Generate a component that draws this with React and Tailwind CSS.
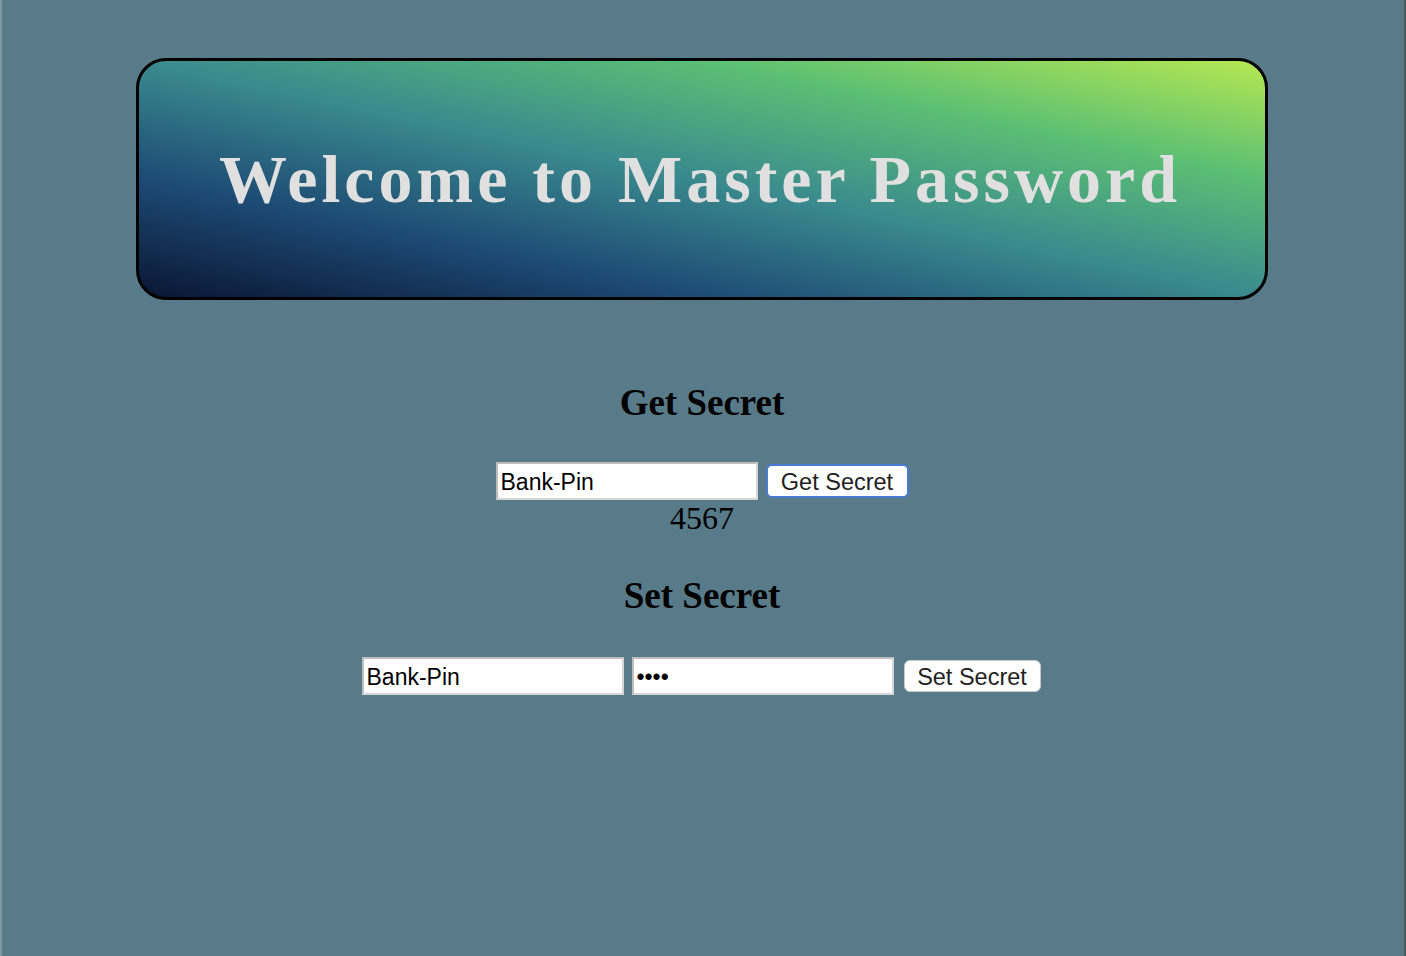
export default function App() {
  const inputCls =
    "w-[262px] h-[38px] bg-white border-2 border-t-[#bdbdbd] border-l-[#bdbdbd] border-b-[#d6d6d6] border-r-[#d6d6d6] px-[3px] pt-[2px] font-['Liberation_Sans',sans-serif] text-[23px] text-black outline-none";
  return (
    <div className="min-h-[956px] w-full bg-[#587a89] border-l-2 border-l-[#7d98a3] border-r-[4px] border-r-[#587a89] flex flex-col items-center">
      <div className="mt-[58px] w-[1132px] h-[242px] rounded-[30px] border-[3px] border-black bg-[linear-gradient(to_top_right,#0a1633_0%,#1d4a74_25%,#3a8a8e_50%,#5bbf74_75%,#b6e852_100%)] flex items-center justify-center">
        <h1 className="font-['Liberation_Serif',serif] font-bold text-[68px] tracking-[4px] text-[#e0e0e0] leading-none pr-[4px]">
          Welcome to Master Password
        </h1>
      </div>

      <h2 className="mt-[84px] font-['Liberation_Serif',serif] font-bold text-[37px] leading-none text-black">Get Secret</h2>
      <div className="mt-[41px] flex items-center gap-[8px]">
        <input defaultValue="Bank-Pin" className={inputCls} />
        <button className="w-[143px] h-[34px] pt-[3px] bg-white rounded-[6px] border-2 border-[#4a7bd3] font-['Liberation_Sans',sans-serif] text-[23.5px] text-[#222] leading-none">
          Get Secret
        </button>
      </div>
      <div className="font-['Liberation_Serif',serif] text-[32px] leading-none mt-[2px] text-black">4567</div>

      <h2 className="mt-[43px] font-['Liberation_Serif',serif] font-bold text-[37px] leading-none text-black">Set Secret</h2>
      <div className="mt-[43px] flex items-center gap-[8px] mr-[2px]">
        <input defaultValue="Bank-Pin" className={inputCls} />
        <input type="password" defaultValue="abcd" className={inputCls} />
        <button className="ml-[2px] w-[137px] h-[32px] pt-[3px] bg-white rounded-[6px] border border-[#c8c8c8] font-['Liberation_Sans',sans-serif] text-[23.5px] text-[#222] leading-none">
          Set Secret
        </button>
      </div>
      <div className="fixed top-0 right-0 h-full w-[2px] bg-[#4b5a60]" />
    </div>
  );
}
